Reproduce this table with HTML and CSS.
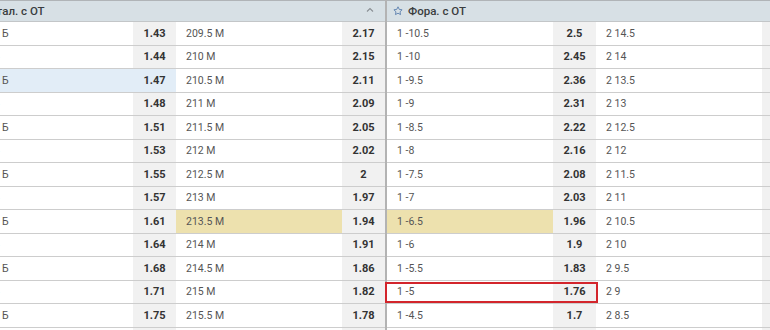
FILE: index.html
```html
<!DOCTYPE html>
<html>
<head>
<meta charset="utf-8">
<link rel="stylesheet" href="styles.css">
</head>
<body>
<div class="board">
  <section class="panel panel-left">
    <header class="head">
      <span class="star">
        <svg width="10" height="10" viewBox="0 0 10 10"><path d="M5 .8l1.25 2.6 2.85.38-2.08 1.97.52 2.83L5 7.2 2.46 8.58l.52-2.83L.9 3.78l2.85-.38z" fill="none" stroke="#5b7fae" stroke-width=".9" stroke-linejoin="round"/></svg>
      </span>
      <span class="title">Тотал. с ОТ</span>
      <span class="chev">
        <svg width="8" height="6" viewBox="0 0 8 6"><path d="M1 4.5l3-3 3 3" fill="none" stroke="#8a8f94" stroke-width="1.1"/></svg>
      </span>
    </header>
    <div class="row"><div class="pair"><span class="lbl">209.5 Б</span><span class="odd">1.43</span></div><div class="pair"><span class="lbl">209.5 M</span><span class="odd">2.17</span></div></div>
    <div class="row"><div class="pair"><span class="lbl">210 Б</span><span class="odd">1.44</span></div><div class="pair"><span class="lbl">210 M</span><span class="odd">2.15</span></div></div>
    <div class="row"><div class="pair sel"><span class="lbl">210.5 Б</span><span class="odd">1.47</span></div><div class="pair"><span class="lbl">210.5 M</span><span class="odd">2.11</span></div></div>
    <div class="row"><div class="pair"><span class="lbl">211 Б</span><span class="odd">1.48</span></div><div class="pair"><span class="lbl">211 M</span><span class="odd">2.09</span></div></div>
    <div class="row"><div class="pair"><span class="lbl">211.5 Б</span><span class="odd">1.51</span></div><div class="pair"><span class="lbl">211.5 M</span><span class="odd">2.05</span></div></div>
    <div class="row"><div class="pair"><span class="lbl">212 Б</span><span class="odd">1.53</span></div><div class="pair"><span class="lbl">212 M</span><span class="odd">2.02</span></div></div>
    <div class="row"><div class="pair"><span class="lbl">212.5 Б</span><span class="odd">1.55</span></div><div class="pair"><span class="lbl">212.5 M</span><span class="odd">2</span></div></div>
    <div class="row"><div class="pair"><span class="lbl">213 Б</span><span class="odd">1.57</span></div><div class="pair"><span class="lbl">213 M</span><span class="odd">1.97</span></div></div>
    <div class="row"><div class="pair"><span class="lbl">213.5 Б</span><span class="odd">1.61</span></div><div class="pair main"><span class="lbl">213.5 M</span><span class="odd">1.94</span></div></div>
    <div class="row"><div class="pair"><span class="lbl">214 Б</span><span class="odd">1.64</span></div><div class="pair"><span class="lbl">214 M</span><span class="odd">1.91</span></div></div>
    <div class="row"><div class="pair"><span class="lbl">214.5 Б</span><span class="odd">1.68</span></div><div class="pair"><span class="lbl">214.5 M</span><span class="odd">1.86</span></div></div>
    <div class="row"><div class="pair"><span class="lbl">215 Б</span><span class="odd">1.71</span></div><div class="pair"><span class="lbl">215 M</span><span class="odd">1.82</span></div></div>
    <div class="row"><div class="pair"><span class="lbl">215.5 Б</span><span class="odd">1.75</span></div><div class="pair"><span class="lbl">215.5 M</span><span class="odd">1.78</span></div></div>
    <div class="row"><div class="pair"><span class="lbl">216 Б</span><span class="odd">1.78</span></div><div class="pair"><span class="lbl">216 M</span><span class="odd">1.75</span></div></div>
  </section>
  <div class="divider"></div>
  <section class="panel">
    <header class="head">
      <span class="star">
        <svg width="10" height="10" viewBox="0 0 10 10"><path d="M5 .8l1.25 2.6 2.85.38-2.08 1.97.52 2.83L5 7.2 2.46 8.58l.52-2.83L.9 3.78l2.85-.38z" fill="none" stroke="#5b7fae" stroke-width=".9" stroke-linejoin="round"/></svg>
      </span>
      <span class="title">Фора. с ОТ</span>
    </header>
    <div class="row"><div class="pair"><span class="lbl">1 -10.5</span><span class="odd">2.5</span></div><div class="pair"><span class="lbl">2 14.5</span><span class="odd">1.5</span></div></div>
    <div class="row"><div class="pair"><span class="lbl">1 -10</span><span class="odd">2.45</span></div><div class="pair"><span class="lbl">2 14</span><span class="odd">1.52</span></div></div>
    <div class="row"><div class="pair"><span class="lbl">1 -9.5</span><span class="odd">2.36</span></div><div class="pair"><span class="lbl">2 13.5</span><span class="odd">1.56</span></div></div>
    <div class="row"><div class="pair"><span class="lbl">1 -9</span><span class="odd">2.31</span></div><div class="pair"><span class="lbl">2 13</span><span class="odd">1.58</span></div></div>
    <div class="row"><div class="pair"><span class="lbl">1 -8.5</span><span class="odd">2.22</span></div><div class="pair"><span class="lbl">2 12.5</span><span class="odd">1.62</span></div></div>
    <div class="row"><div class="pair"><span class="lbl">1 -8</span><span class="odd">2.16</span></div><div class="pair"><span class="lbl">2 12</span><span class="odd">1.65</span></div></div>
    <div class="row"><div class="pair"><span class="lbl">1 -7.5</span><span class="odd">2.08</span></div><div class="pair"><span class="lbl">2 11.5</span><span class="odd">1.7</span></div></div>
    <div class="row"><div class="pair"><span class="lbl">1 -7</span><span class="odd">2.03</span></div><div class="pair"><span class="lbl">2 11</span><span class="odd">1.73</span></div></div>
    <div class="row"><div class="pair main"><span class="lbl">1 -6.5</span><span class="odd">1.96</span></div><div class="pair"><span class="lbl">2 10.5</span><span class="odd">1.78</span></div></div>
    <div class="row"><div class="pair"><span class="lbl">1 -6</span><span class="odd">1.9</span></div><div class="pair"><span class="lbl">2 10</span><span class="odd">1.83</span></div></div>
    <div class="row"><div class="pair"><span class="lbl">1 -5.5</span><span class="odd">1.83</span></div><div class="pair"><span class="lbl">2 9.5</span><span class="odd">1.9</span></div></div>
    <div class="row"><div class="pair boxed"><span class="lbl">1 -5</span><span class="odd">1.76</span></div><div class="pair"><span class="lbl">2 9</span><span class="odd">1.98</span></div></div>
    <div class="row"><div class="pair"><span class="lbl">1 -4.5</span><span class="odd">1.7</span></div><div class="pair"><span class="lbl">2 8.5</span><span class="odd">2.05</span></div></div>
    <div class="row"><div class="pair"><span class="lbl">1 -4</span><span class="odd">1.66</span></div><div class="pair"><span class="lbl">2 8</span><span class="odd">2.1</span></div></div>
  </section>
</div>
</body>
</html>
```

FILE: styles.css
```css
html, body {
  margin: 0;
  padding: 0;
  background: #ffffff;
  overflow: hidden;
}

body {
  width: 770px;
  height: 330px;
  font-family: Roboto, "Liberation Sans", Arial, sans-serif;
  color: #444;
}

.board {
  display: flex;
  margin-left: -37px;
  width: 850px;
}

.panel {
  flex: 0 0 418px;
  display: flex;
  flex-direction: column;
}

.panel-left {
  flex-basis: 422px;
}

.divider {
  flex: 0 0 2px;
  background: #b3b3b3;
}

.head {
  height: 22px;
  box-sizing: border-box;
  border-top: 1px solid #b0b4b7;
  border-bottom: 1px solid #c3c6c8;
  background: #d7e0e5;
  display: flex;
  align-items: center;
  padding-left: 6px;
  padding-right: 11px;
}

.star {
  display: flex;
  width: 10px;
  height: 10px;
  margin-right: 5px;
  margin-top: -1px;
}

.title {
  font-size: 11.5px;
  font-weight: 500;
  color: #3a3d40;
  flex: 1;
}

.chev {
  display: flex;
  margin-top: -2px;
}

.row {
  display: flex;
  height: 23.5px;
  box-sizing: border-box;
  border-bottom: 1px solid #cdcdcd;
}

.pair {
  flex: 0 0 auto;
  display: flex;
  position: relative;
}

.lbl {
  flex: 0 0 166px;
  box-sizing: border-box;
  padding-left: 10px;
  display: flex;
  align-items: center;
  font-size: 10.5px;
  color: #555;
  white-space: nowrap;
}

.panel-left .pair:first-child .lbl {
  flex-basis: 170px;
}

.odd {
  flex: 0 0 43px;
  display: flex;
  align-items: center;
  justify-content: center;
  background: #f1f1f1;
  font-size: 11px;
  font-weight: 700;
  color: #333;
}

.sel .lbl,
.sel .odd {
  background: #e2edf7;
}

.main .lbl {
  background: #ede1ae;
}

.boxed::after {
  content: "";
  position: absolute;
  left: -2px;
  right: -2px;
  top: 1px;
  bottom: 0;
  border: 2px solid #d3252c;
  pointer-events: none;
}
```
